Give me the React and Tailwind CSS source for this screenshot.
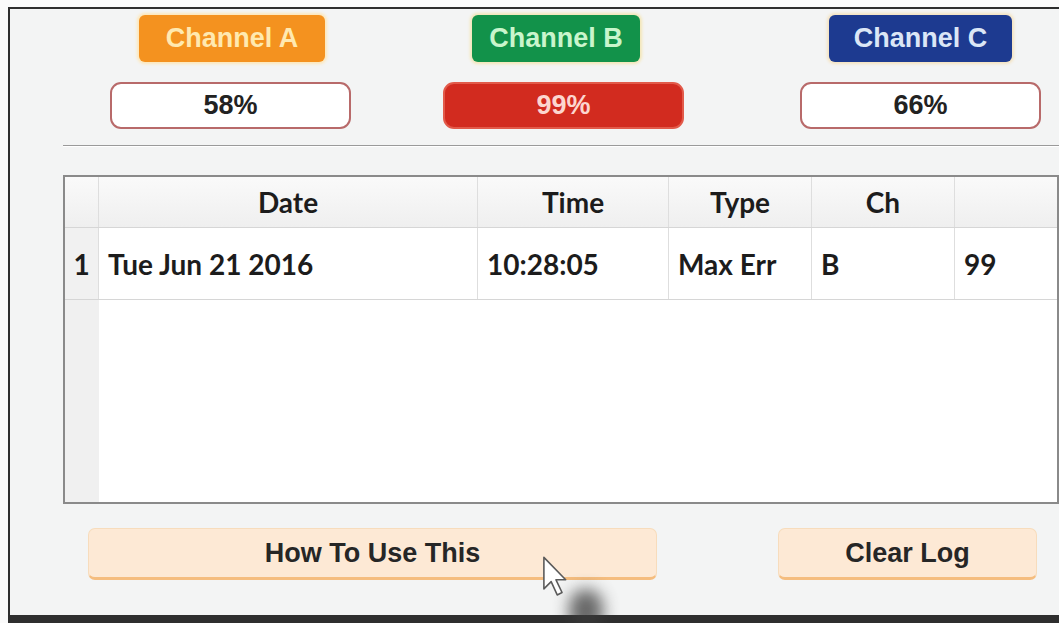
import React from "react";

const channels = [
  {
    name: "Channel A",
    value: "58%",
    badge: "bg-[#f4921f] text-[#ffe9b0] w-[186px] shadow-[0_0_3px_2px_#fde7b8]",
    box: "bg-white text-[#222] border-[#b86a6a]",
  },
  {
    name: "Channel B",
    value: "99%",
    badge: "bg-[#12924a] text-[#c9f5cc] w-[168px] shadow-[0_0_3px_2px_#f3e6b6]",
    box: "bg-[#d22b1f] text-[#fcd6cf] border-[#e25a4a]",
  },
  {
    name: "Channel C",
    value: "66%",
    badge: "bg-[#1d3a90] text-[#dbe6f6] w-[183px] shadow-[0_0_3px_2px_#f4e3c0]",
    box: "bg-white text-[#222] border-[#b86a6a]",
  },
];

const cols = [
  { label: "Date", w: "w-[379px]", value: "Tue Jun 21 2016" },
  { label: "Time", w: "w-[191px]", value: "10:28:05" },
  { label: "Type", w: "w-[143px]", value: "Max Err" },
  { label: "Ch", w: "w-[143px]", value: "B" },
  { label: "", w: "flex-1", value: "99" },
];

function Cursor() {
  return (
    <div className="absolute left-[539px] top-[555px] pointer-events-none">
      <div className="absolute left-[30px] top-[34px] w-[34px] h-[44px] rounded-full bg-[#3a3a3a] blur-[8px] opacity-75" />
      <svg width="34" height="46" viewBox="0 0 26 38" className="relative">
        <path
          d="M3 2 L3 28 L9 22 L14 33 L18 31 L13 20.5 L21 20.5 Z"
          fill="#fff"
          stroke="#5a5a5a"
          strokeWidth="1.3"
          strokeLinejoin="round"
        />
      </svg>
    </div>
  );
}

export default function App() {
  return (
    <div className="relative w-[1059px] h-[623px] overflow-hidden bg-[#fafafa] font-['Liberation_Sans',Arial,sans-serif]">
      <div className="ml-[8px] mt-[7px] h-[616px] bg-[#f3f4f4] border-l-2 border-t-2 border-b-[8px] border-[#2e2e2e] flex flex-col">
        {/* Channel badges + levels */}
        <div className="flex pt-[6px] pl-[100px]">
          {channels.map((c, i) => (
            <div
              key={c.name}
              className={
                "flex flex-col gap-[20px] " +
                (i === 0 ? "mr-[92px]" : i === 1 ? "mr-[116px]" : "")
              }
            >
              <div
                className={
                  "ml-[29px] h-[47px] rounded-[6px] flex items-center justify-center text-[27px] font-bold " +
                  c.badge
                }
              >
                {c.name}
              </div>
              <div
                className={
                  "w-[241px] h-[47px] rounded-[11px] border-2 flex items-center justify-center text-[27px] font-bold " +
                  c.box
                }
              >
                {c.value}
              </div>
            </div>
          ))}
        </div>

        <div className="ml-[53px] mt-[16px] h-[2px] bg-[#9a9a9a] border-b border-[#fff]" />

        {/* Log table */}
        <div className="ml-[53px] mt-[28px] h-[329px] border-2 border-[#8a8a8a] bg-white flex flex-col font-['Lato',sans-serif] font-bold text-[28px] text-[#1c1c1c]">
          <div className="flex h-[51px] bg-gradient-to-b from-[#fafafa] to-[#efefef] border-b border-[#d6d6d6]">
            <div className="w-[34px] border-r border-[#dedede]" />
            {cols.map((c) => (
              <div
                key={c.label + c.w}
                className={c.w + " flex items-center justify-center border-r border-[#dedede] last:border-r-0"}
              >
                {c.label}
              </div>
            ))}
          </div>
          <div className="flex h-[72px] border-b border-[#d6d6d6]">
            <div className="w-[34px] bg-[#f1f1f1] border-r border-[#dedede] flex items-center justify-center">
              1
            </div>
            {cols.map((c) => (
              <div
                key={c.value}
                className={c.w + " flex items-center pl-[9px] border-r border-[#dedede] last:border-r-0"}
              >
                {c.value}
              </div>
            ))}
          </div>
          <div className="flex flex-1">
            <div className="w-[34px] bg-[#f0f0f0]" />
            <div className="flex-1" />
          </div>
        </div>

        {/* Buttons */}
        <div className="flex mt-[24px] pl-[78px]">
          <button className="w-[569px] h-[52px] rounded-[7px] bg-[#fde9d5] border border-[#f7dcbc] border-b-[3px] border-b-[#f5bd7f] text-[27px] font-bold text-[#262626]">
            How To Use This
          </button>
          <button className="ml-[121px] w-[259px] h-[52px] rounded-[7px] bg-[#fde9d5] border border-[#f7dcbc] border-b-[3px] border-b-[#f5bd7f] text-[27px] font-bold text-[#262626]">
            Clear Log
          </button>
        </div>
      </div>
      <Cursor />
    </div>
  );
}
